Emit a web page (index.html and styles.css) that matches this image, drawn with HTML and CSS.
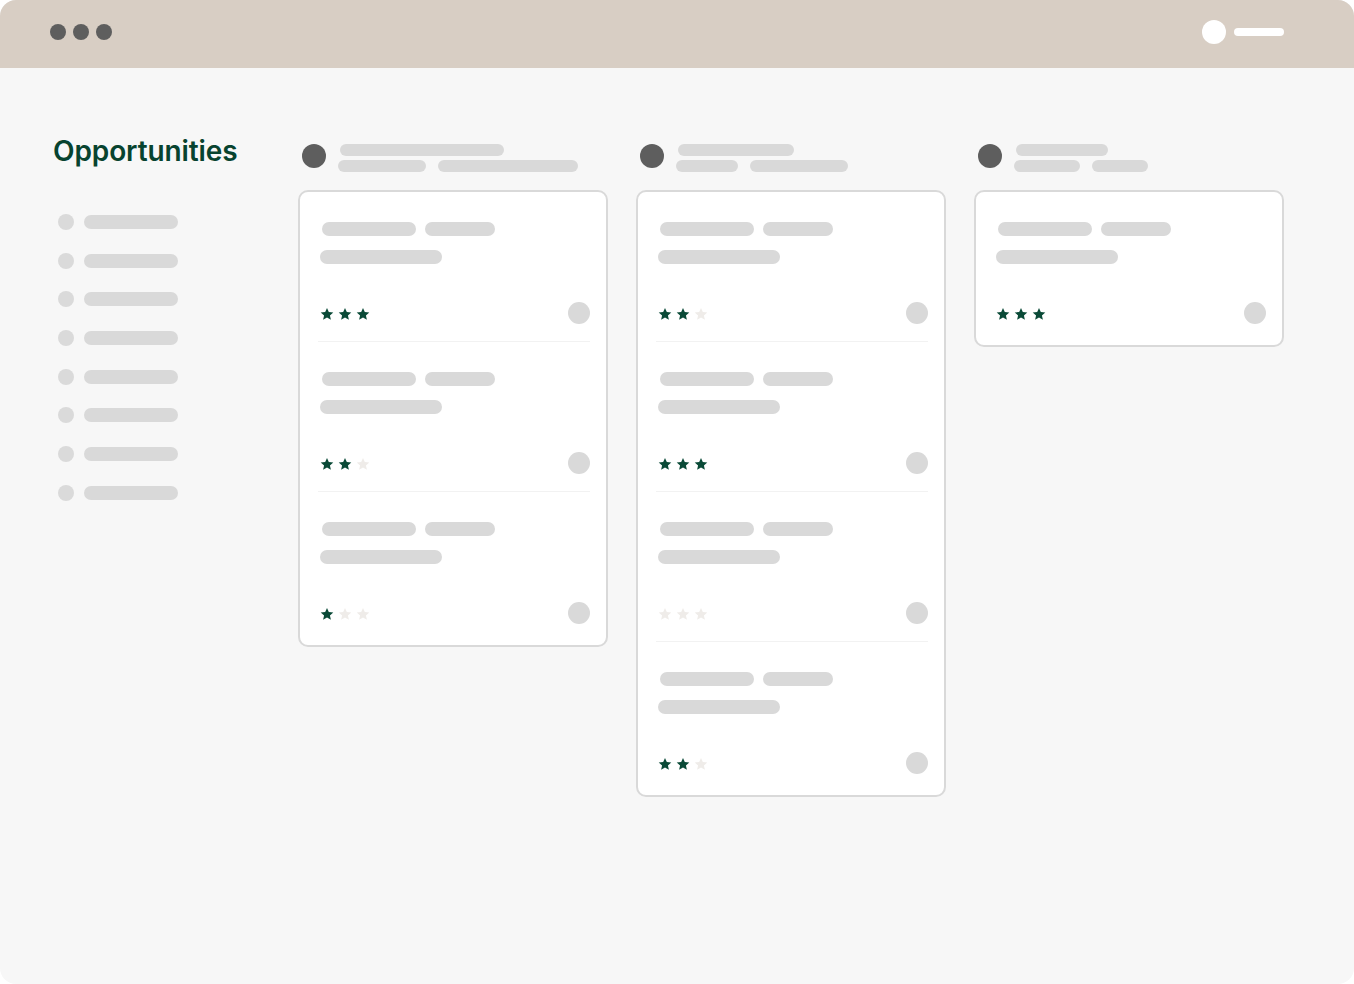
FILE: index.html
```html
<!DOCTYPE html>
<html lang="en">
  <head>
    <meta charset="UTF-8" />
    <meta name="viewport" content="width=device-width, initial-scale=1.0" />
    <title>Opportunities</title>
    <link rel="stylesheet" href="styles.css">
  </head>
  <body>
    <svg width="0" height="0" class="defs">
      <symbol id="star" viewBox="0 0 24 24">
        <path d="M12 1.5l3.1 7.1 7.7.7-5.8 5.1 1.7 7.6L12 18l-6.7 4 1.7-7.6-5.8-5.1 7.7-.7z" />
      </symbol>
    </svg>
    <div class="window">
      <header class="topbar">
        <div class="dots">
          <span></span><span></span><span></span>
        </div>
        <div class="user">
          <span class="avatar"></span>
          <span class="user-line"></span>
        </div>
      </header>

      <main class="main">
        <aside class="sidebar">
          <h1>Opportunities</h1>
          <ul class="menu">
            <li><span class="dot"></span><span class="bar"></span></li>
            <li><span class="dot"></span><span class="bar"></span></li>
            <li><span class="dot"></span><span class="bar"></span></li>
            <li><span class="dot"></span><span class="bar"></span></li>
            <li><span class="dot"></span><span class="bar"></span></li>
            <li><span class="dot"></span><span class="bar"></span></li>
            <li><span class="dot"></span><span class="bar"></span></li>
            <li><span class="dot"></span><span class="bar"></span></li>
          </ul>
        </aside>

        <section class="board">
          <!-- column 1 -->
          <div class="column">
            <div class="column-head">
              <span class="head-avatar"></span>
              <div class="head-lines">
                <span class="bar head-top" style="width: 164px"></span>
                <div class="head-row">
                  <span class="bar" style="width: 88px"></span>
                  <span class="bar" style="width: 140px"></span>
                </div>
              </div>
            </div>
            <div class="card">
              <div class="item">
                <div class="row"><span class="bar w94"></span><span class="bar w70"></span></div>
                <span class="bar w122"></span>
                <div class="item-foot">
                  <div class="stars">
                    <svg class="on"><use href="#star" /></svg>
                    <svg class="on"><use href="#star" /></svg>
                    <svg class="on"><use href="#star" /></svg>
                  </div>
                  <span class="owner"></span>
                </div>
              </div>
              <div class="item">
                <div class="row"><span class="bar w94"></span><span class="bar w70"></span></div>
                <span class="bar w122"></span>
                <div class="item-foot">
                  <div class="stars">
                    <svg class="on"><use href="#star" /></svg>
                    <svg class="on"><use href="#star" /></svg>
                    <svg><use href="#star" /></svg>
                  </div>
                  <span class="owner"></span>
                </div>
              </div>
              <div class="item">
                <div class="row"><span class="bar w94"></span><span class="bar w70"></span></div>
                <span class="bar w122"></span>
                <div class="item-foot">
                  <div class="stars">
                    <svg class="on"><use href="#star" /></svg>
                    <svg><use href="#star" /></svg>
                    <svg><use href="#star" /></svg>
                  </div>
                  <span class="owner"></span>
                </div>
              </div>
            </div>
          </div>

          <!-- column 2 -->
          <div class="column">
            <div class="column-head">
              <span class="head-avatar"></span>
              <div class="head-lines">
                <span class="bar head-top" style="width: 116px"></span>
                <div class="head-row">
                  <span class="bar" style="width: 62px"></span>
                  <span class="bar" style="width: 98px"></span>
                </div>
              </div>
            </div>
            <div class="card">
              <div class="item">
                <div class="row"><span class="bar w94"></span><span class="bar w70"></span></div>
                <span class="bar w122"></span>
                <div class="item-foot">
                  <div class="stars">
                    <svg class="on"><use href="#star" /></svg>
                    <svg class="on"><use href="#star" /></svg>
                    <svg><use href="#star" /></svg>
                  </div>
                  <span class="owner"></span>
                </div>
              </div>
              <div class="item">
                <div class="row"><span class="bar w94"></span><span class="bar w70"></span></div>
                <span class="bar w122"></span>
                <div class="item-foot">
                  <div class="stars">
                    <svg class="on"><use href="#star" /></svg>
                    <svg class="on"><use href="#star" /></svg>
                    <svg class="on"><use href="#star" /></svg>
                  </div>
                  <span class="owner"></span>
                </div>
              </div>
              <div class="item">
                <div class="row"><span class="bar w94"></span><span class="bar w70"></span></div>
                <span class="bar w122"></span>
                <div class="item-foot">
                  <div class="stars">
                    <svg><use href="#star" /></svg>
                    <svg><use href="#star" /></svg>
                    <svg><use href="#star" /></svg>
                  </div>
                  <span class="owner"></span>
                </div>
              </div>
              <div class="item">
                <div class="row"><span class="bar w94"></span><span class="bar w70"></span></div>
                <span class="bar w122"></span>
                <div class="item-foot">
                  <div class="stars">
                    <svg class="on"><use href="#star" /></svg>
                    <svg class="on"><use href="#star" /></svg>
                    <svg><use href="#star" /></svg>
                  </div>
                  <span class="owner"></span>
                </div>
              </div>
            </div>
          </div>

          <!-- column 3 -->
          <div class="column">
            <div class="column-head">
              <span class="head-avatar"></span>
              <div class="head-lines">
                <span class="bar head-top" style="width: 92px"></span>
                <div class="head-row">
                  <span class="bar" style="width: 66px"></span>
                  <span class="bar" style="width: 56px"></span>
                </div>
              </div>
            </div>
            <div class="card">
              <div class="item">
                <div class="row"><span class="bar w94"></span><span class="bar w70"></span></div>
                <span class="bar w122"></span>
                <div class="item-foot">
                  <div class="stars">
                    <svg class="on"><use href="#star" /></svg>
                    <svg class="on"><use href="#star" /></svg>
                    <svg class="on"><use href="#star" /></svg>
                  </div>
                  <span class="owner"></span>
                </div>
              </div>
            </div>
          </div>
        </section>
      </main>
    </div>
  </body>
</html>
```

FILE: styles.css
```css
body {
  margin: 0;
  padding: 0;
  background: #ffffff;
  font-family: Inter, "Noto Sans", sans-serif;
}

.defs {
  position: absolute;
}

.window {
  height: 984px;
  background: #f7f7f7;
  border-radius: 16px;
  overflow: hidden;
}

.topbar {
  height: 64px;
  background: #d8cec4;
  display: flex;
  align-items: center;
  justify-content: space-between;
  padding: 0 70px 4px 50px;
}

.dots {
  display: flex;
  gap: 7px;
}

.dots span {
  width: 16px;
  height: 16px;
  border-radius: 50%;
  background: #5e5e5e;
}

.user {
  display: flex;
  align-items: center;
  gap: 8px;
}

.avatar {
  width: 24px;
  height: 24px;
  border-radius: 50%;
  background: #ffffff;
}

.user-line {
  width: 50px;
  height: 8px;
  border-radius: 4px;
  background: #ffffff;
}

.main {
  display: flex;
  padding: 64px 0 0 53px;
}

.sidebar {
  width: 245px;
  flex-shrink: 0;
  padding-top: 3px;
}

.sidebar h1 {
  margin: 0;
  font-size: 28px;
  line-height: 32px;
  font-weight: 600;
  color: #07432f;
  letter-spacing: -0.1px;
}

.menu {
  list-style: none;
  margin: 47px 0 0;
  padding: 0 0 0 5px;
  display: flex;
  flex-direction: column;
  gap: 22.7px;
}

.menu li {
  display: flex;
  align-items: center;
  gap: 10px;
}

.dot {
  width: 16px;
  height: 16px;
  border-radius: 50%;
  background: #dadada;
}

.bar {
  display: block;
  height: 14px;
  border-radius: 7px;
  background: #d9d9d9;
}

.menu .bar {
  width: 94px;
}

.board {
  display: grid;
  grid-template-columns: repeat(3, 310px);
  gap: 28px;
  align-items: start;
  padding-top: 12px;
}

.column-head {
  display: flex;
  align-items: flex-start;
  gap: 12px;
  padding-left: 4px;
  margin-bottom: 18px;
}

.head-avatar {
  width: 24px;
  height: 24px;
  border-radius: 50%;
  background: #5e5e5e;
}

.head-lines {
  display: flex;
  flex-direction: column;
  gap: 4px;
}

.head-lines .bar {
  height: 12px;
  border-radius: 6px;
}

.head-top {
  margin-left: 2px;
}

.head-row {
  display: flex;
  gap: 12px;
}

.card {
  background: #ffffff;
  border: 2px solid #d9d9d9;
  border-radius: 10px;
  padding: 0 16px 0 18px;
}

.item {
  padding: 30px 0 17px 2px;
  border-bottom: 1px solid #f2f2f2;
}

.item:last-child {
  border-bottom: none;
  padding-bottom: 21px;
}

.row {
  display: flex;
  gap: 9px;
  margin: 0 0 14px 2px;
}

.w94 { width: 94px; }
.w70 { width: 70px; }
.w122 { width: 122px; }

.item-foot {
  display: flex;
  align-items: center;
  justify-content: space-between;
  margin-top: 38px;
}

.stars {
  display: flex;
  gap: 4px;
  padding-top: 2px;
}

.stars svg {
  width: 14px;
  height: 14px;
  fill: #efece9;
}

.stars svg.on {
  fill: #0a4a37;
}

.owner {
  width: 22px;
  height: 22px;
  border-radius: 50%;
  background: #d9d9d9;
}
```
